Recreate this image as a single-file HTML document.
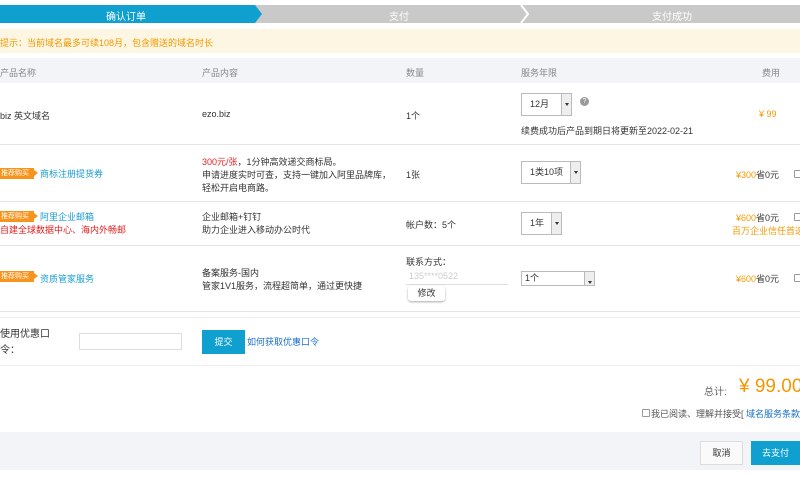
<!DOCTYPE html>
<html><head><meta charset="utf-8"><style>
*{margin:0;padding:0;box-sizing:border-box}
body{width:800px;height:479px;overflow:hidden;background:#fff;font-family:"Liberation Sans","Noto Sans CJK SC",sans-serif;font-size:9px;color:#333;position:relative}
.a{position:absolute;white-space:nowrap}
.ln{position:absolute;left:0;width:800px;height:1px;background:#e5e5e5}
.tag{position:absolute;background:#f7941d;color:#fff;font-size:7px;height:11px;line-height:11px;padding:0 1px;width:34px;overflow:visible}
.tag:after{content:"";position:absolute;right:-4px;top:2px;border-left:4px solid #f7941d;border-top:3.5px solid transparent;border-bottom:3.5px solid transparent}
.sel{position:absolute;border:1px solid #bbb;background:#fff;height:23px;line-height:21px;padding-left:8px;font-size:9px}
.sel i{position:absolute;right:0;top:0;width:10px;height:100%;background:#eee;border-left:1px solid #bbb}
.sel i:after{content:"";position:absolute;left:3px;top:9px;border-top:3px solid #333;border-left:2px solid transparent;border-right:2px solid transparent}
.or{color:#f39800}.bl{color:#1a9cd0}
.cb{position:absolute;width:8px;height:8px;border:1px solid #999;background:#fff;border-radius:1px}
</style></head><body>
<svg class="a" style="left:0;top:5px" width="800" height="18">
<rect x="0" y="0" width="800" height="18" fill="#c9c9c9"/>
<polygon points="0,0 255,0 262,9 255,18 0,18" fill="#10a0cf"/>
<polyline points="521,0 528,9 521,18" fill="none" stroke="#fff" stroke-width="2"/>
</svg>
<div class="a" style="left:106px;top:8px;color:#fff;font-size:10px">确认订单</div>
<div class="a" style="left:389px;top:8px;color:#fff;font-size:10px">支付</div>
<div class="a" style="left:652px;top:8px;color:#fff;font-size:10px">支付成功</div>
<div class="a" style="left:0;top:29px;width:800px;height:24px;background:#fdf6e3"></div>
<div class="a" style="left:0;top:36px;color:#f39800">提示：当前域名最多可续108月，包含赠送的域名时长</div>
<div class="a" style="left:0;top:58px;width:800px;height:25px;background:#f2f4f7"></div>
<div class="a" style="left:0;top:66px;color:#888">产品名称</div>
<div class="a" style="left:202px;top:66px;color:#888">产品内容</div>
<div class="a" style="left:406px;top:66px;color:#888">数量</div>
<div class="a" style="left:521px;top:66px;color:#888">服务年限</div>
<div class="a" style="left:762px;top:66px;color:#888">费用</div>

<div class="a" style="left:0;top:109px">biz 英文域名</div>
<div class="a" style="left:202px;top:109px">ezo.biz</div>
<div class="a" style="left:406px;top:109px">1个</div>
<div class="sel" style="left:521px;top:93px;width:51px">12月<i></i></div>
<div class="a" style="left:580px;top:97px;width:9px;height:9px;border-radius:50%;background:#999;color:#fff;font-size:7px;text-align:center;line-height:9px">?</div>
<div class="a" style="left:521px;top:124px">续费成功后产品到期日将更新至2022-02-21</div>
<div class="a or" style="left:759px;top:109px">¥ 99</div>
<div class="ln" style="top:144px"></div>

<div class="tag" style="left:0;top:168px">推荐购买</div>
<div class="a bl" style="left:40px;top:167px">商标注册提货券</div>
<div class="a" style="left:202px;top:155px"><span style="color:#e02020">300元/张</span>，1分钟高效递交商标局。</div>
<div class="a" style="left:202px;top:168px">申请进度实时可查，支持一键加入阿里品牌库，</div>
<div class="a" style="left:202px;top:181px">轻松开启电商路。</div>
<div class="a" style="left:406px;top:168px">1张</div>
<div class="sel" style="left:521px;top:161px;width:60px">1类10项<i></i></div>
<div class="a" style="left:736px;top:168px"><span class="or">¥300</span>省0元</div>
<div class="cb" style="left:794px;top:170px"></div>
<div class="ln" style="top:201px"></div>

<div class="tag" style="left:0;top:211px">推荐购买</div>
<div class="a bl" style="left:40px;top:210px">阿里企业邮箱</div>
<div class="a" style="left:0;top:223px;color:#e02020">自建全球数据中心、海内外畅邮</div>
<div class="a" style="left:202px;top:210px">企业邮箱+钉钉</div>
<div class="a" style="left:202px;top:223px">助力企业进入移动办公时代</div>
<div class="a" style="left:406px;top:218px">帐户数：5个</div>
<div class="sel" style="left:521px;top:212px;width:41px">1年<i></i></div>
<div class="a" style="left:736px;top:211px"><span class="or">¥600</span>省0元</div>
<div class="a or" style="left:732px;top:224px">百万企业信任首选</div>
<div class="cb" style="left:794px;top:213px"></div>
<div class="ln" style="top:245px"></div>

<div class="tag" style="left:0;top:271px">推荐购买</div>
<div class="a bl" style="left:40px;top:272px">资质管家服务</div>
<div class="a" style="left:202px;top:266px">备案服务-国内</div>
<div class="a" style="left:202px;top:279px">管家1V1服务，流程超简单，通过更快捷</div>
<div class="a" style="left:406px;top:255px">联系方式：</div>
<div class="a" style="left:409px;top:271px;color:#ccc">135****0522</div>
<div class="a" style="left:406px;top:284px;width:102px;height:1px;background:#ddd"></div>
<div class="a" style="left:408px;top:286px;width:37px;height:15px;border-radius:3px;box-shadow:0 1px 2px #aaa;text-align:center;line-height:15px">修改</div>
<div class="sel" style="left:521px;top:271px;width:74px;height:15px;line-height:13px;padding-left:3px">1个<i style="top:0"></i></div>
<div class="a" style="left:736px;top:272px"><span class="or">¥600</span>省0元</div>
<div class="cb" style="left:794px;top:274px"></div>
<div class="ln" style="top:311px"></div>
<div class="ln" style="top:317px;background:#eee"></div>

<div class="a" style="left:0;top:327px;font-size:10px;line-height:16px;white-space:normal;width:60px">使用优惠口令：</div>
<div class="a" style="left:79px;top:333px;width:103px;height:17px;border:1px solid #ddd"></div>
<div class="a" style="left:202px;top:330px;width:43px;height:24px;background:#10a0cf;color:#fff;text-align:center;line-height:24px">提交</div>
<div class="a" style="left:247px;top:335px;color:#1a6fc9">如何获取优惠口令</div>
<div class="ln" style="top:365px;background:#eee"></div>

<div class="a" style="left:704px;top:383px;color:#666;font-size:10px">总计:</div>
<div class="a or" style="left:739px;top:376px;font-size:19px">¥ 99.00</div>
<div class="cb" style="left:642px;top:409px"></div>
<div class="a" style="left:651px;top:407px;color:#555">我已阅读、理解并接受[ <span style="color:#1a6fc9">域名服务条款</span></div>

<div class="a" style="left:0;top:432px;width:800px;height:38px;background:#f2f4f7"></div>
<div class="a" style="left:700px;top:441px;width:43px;height:24px;border:1px solid #ddd;background:#fafafa;text-align:center;line-height:22px">取消</div>
<div class="a" style="left:751px;top:441px;width:49px;height:24px;background:#10a0cf;color:#fff;text-align:center;line-height:24px">去支付</div>
</body></html>
